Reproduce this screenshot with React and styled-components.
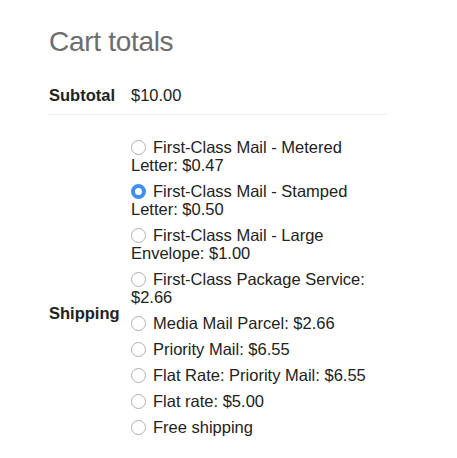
import React, { useState } from 'react';
import styled, { createGlobalStyle } from 'styled-components';

const Global = createGlobalStyle`
  body {
    margin: 0;
    background: #ffffff;
    font-family: "Liberation Sans", Arial, sans-serif;
    color: #222222;
  }
`;

const Totals = styled.div`
  width: 338px;
  padding: 27px 0 0 49px;
`;

const Title = styled.h2`
  margin: 0 0 29px;
  font-family: "Liberation Sans", Arial, sans-serif;
  font-size: 28px;
  line-height: 30px;
  font-weight: 400;
  color: #6d6d6d;
  letter-spacing: -0.3px;
`;

const Row = styled.div`
  display: grid;
  grid-template-columns: 82px 1fr;
  align-items: ${({ align }) => align || 'center'};
  padding: ${({ pad }) => pad};
  border-bottom: ${({ line }) => (line ? '1px solid #eeeeee' : 'none')};
`;

const Label = styled.div`
  font-size: 16.5px;
  font-weight: 700;
  color: #222222;
  margin-top: ${({ offset }) => offset || 0};
`;

const Value = styled.div`
  font-size: 16.5px;
  color: #222222;
`;

const Methods = styled.ul`
  list-style: none;
  margin: 0;
  padding: 0;
  width: 244px;
  display: flex;
  flex-direction: column;
  gap: 8px;
`;

const Method = styled.li`
  font-size: 16.5px;
  line-height: 18px;
  color: #222222;
`;

const Radio = styled.input`
  appearance: none;
  width: 15px;
  height: 15px;
  margin: 0 7px 0 0;
  border-radius: 50%;
  border: 1px solid #b0b0b0;
  background: #ffffff;
  vertical-align: -2px;
  box-sizing: border-box;

  &:checked {
    border: 4.5px solid #3b8ff5;
    background: #ffffff;
  }
`;

const methods = [
  'First-Class Mail - Metered Letter: $0.47',
  'First-Class Mail - Stamped Letter: $0.50',
  'First-Class Mail - Large Envelope: $1.00',
  'First-Class Package Service: $2.66',
  'Media Mail Parcel: $2.66',
  'Priority Mail: $6.55',
  'Flat Rate: Priority Mail: $6.55',
  'Flat rate: $5.00',
  'Free shipping',
];

export default function App() {
  const [picked, setPicked] = useState(1);
  return (
    <>
      <Global />
      <Totals>
        <Title>Cart totals</Title>
        <Row pad="0 0 9px" line>
          <Label>Subtotal</Label>
          <Value>$10.00</Value>
        </Row>
        <Row pad="23px 0" align="start">
          <Label offset="166px">Shipping</Label>
          <Methods>
            {methods.map((m, i) => (
              <Method key={m}>
                <label>
                  <Radio
                    type="radio"
                    name="ship"
                    checked={picked === i}
                    onChange={() => setPicked(i)}
                  />
                  {m}
                </label>
              </Method>
            ))}
          </Methods>
        </Row>
      </Totals>
    </>
  );
}
